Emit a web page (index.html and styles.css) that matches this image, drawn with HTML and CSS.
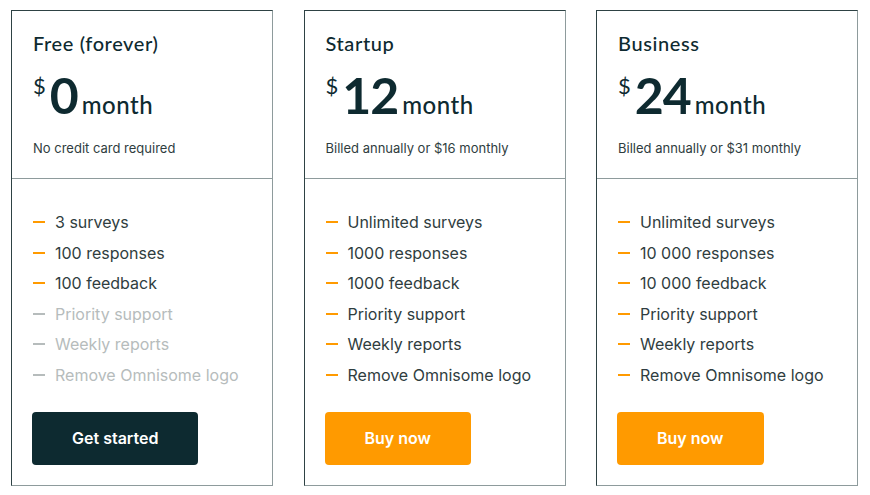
FILE: index.html
```html
<!DOCTYPE html>
<html lang="en">
<head>
<meta charset="utf-8">
<title>Pricing</title>
<link rel="stylesheet" href="styles.css">
</head>
<body>
<div class="plans">
  <section class="card">
    <div class="card-head">
      <h2 class="plan-name">Free (forever)</h2>
      <div class="price"><span class="cur">$</span><span class="amount">0</span><span class="per">month</span></div>
      <p class="note">No credit card required</p>
    </div>
    <div class="card-body">
      <ul class="features">
        <li class="on">3 surveys</li>
        <li class="on">100 responses</li>
        <li class="on">100 feedback</li>
        <li class="off">Priority support</li>
        <li class="off">Weekly reports</li>
        <li class="off">Remove Omnisome logo</li>
      </ul>
      <a class="btn btn-dark" href="#">Get started</a>
    </div>
  </section>
  <section class="card">
    <div class="card-head">
      <h2 class="plan-name">Startup</h2>
      <div class="price"><span class="cur">$</span><span class="amount">12</span><span class="per">month</span></div>
      <p class="note">Billed annually or $16 monthly</p>
    </div>
    <div class="card-body">
      <ul class="features">
        <li class="on">Unlimited surveys</li>
        <li class="on">1000 responses</li>
        <li class="on">1000 feedback</li>
        <li class="on">Priority support</li>
        <li class="on">Weekly reports</li>
        <li class="on">Remove Omnisome logo</li>
      </ul>
      <a class="btn btn-orange" href="#">Buy now</a>
    </div>
  </section>
  <section class="card">
    <div class="card-head">
      <h2 class="plan-name">Business</h2>
      <div class="price"><span class="cur">$</span><span class="amount">24</span><span class="per">month</span></div>
      <p class="note">Billed annually or $31 monthly</p>
    </div>
    <div class="card-body">
      <ul class="features">
        <li class="on">Unlimited surveys</li>
        <li class="on">10 000 responses</li>
        <li class="on">10 000 feedback</li>
        <li class="on">Priority support</li>
        <li class="on">Weekly reports</li>
        <li class="on">Remove Omnisome logo</li>
      </ul>
      <a class="btn btn-orange" href="#">Buy now</a>
    </div>
  </section>
</div>
</body>
</html>
```

FILE: styles.css
```css
* { box-sizing: border-box; }
html, body { margin: 0; padding: 0; background: #fff; }
body {
  font-family: Inter, "Noto Sans", sans-serif;
  color: #2f3d40;
}
.plans {
  display: grid;
  grid-template-columns: repeat(3, 262px);
  column-gap: 30.5px;
  align-items: start;
  padding: 10px 0 0 11px;
}
.card {
  border-top: 1px solid #2e4244;
  border-left: 1px solid #2e4244;
  border-right: 1px solid #8e9b9c;
  border-bottom: 1px solid #8e9b9c;
  background: #fff;
}
.card-head {
  padding: 20px 21px 22px;
  border-bottom: 1px solid #8e9b9c;
}
.plan-name {
  margin: 0;
  font-family: Lato, "Open Sans", sans-serif;
  font-weight: 500;
  font-size: 20px;
  line-height: 24px;
  letter-spacing: 0.6px;
  color: #0e2a30;
}
.price {
  display: flex;
  align-items: baseline;
  margin-top: 14px;
  height: 52px;
  color: #0e2a30;
  font-family: Lato, "Open Sans", sans-serif;
}
.cur {
  align-self: flex-start;
  font-size: 22px;
  line-height: 22px;
  margin-top: 6px;
  margin-right: 4px;
}
.amount {
  font-size: 50px;
  line-height: 52px;
  font-weight: 700;
  letter-spacing: -1px;
}
.per {
  font-size: 24px;
  font-weight: 500;
  letter-spacing: 0.5px;
  margin-left: 4px;
}
.note {
  margin: 19px 0 0;
  font-size: 13px;
  line-height: 16px;
  color: #2f3d40;
}
.card-body {
  padding: 32px 21px 20px;
}
.features {
  list-style: none;
  margin: 0;
  padding: 0;
  display: flex;
  flex-direction: column;
  gap: 8.5px;
}
.features li {
  display: flex;
  align-items: center;
  font-size: 16px;
  line-height: 22px;
}
.features li::before {
  content: "";
  width: 12px;
  height: 2px;
  margin-right: 10px;
  flex: none;
}
.features li.on { color: #2f3d40; }
.features li.on::before { background: #ff9a00; }
.features li.off { color: #b6bcbc; }
.features li.off::before { background: #b6bcbc; }
.btn {
  display: inline-flex;
  align-items: center;
  justify-content: center;
  height: 53px;
  padding: 0 40px;
  margin-top: 26px;
  margin-left: -1px;
  border-radius: 4px;
  font-size: 16px;
  font-weight: 600;
  color: #fff;
  text-decoration: none;
}
.btn-dark { background: #0d2a30; }
.btn-orange { background: #ff9a00; }
```
